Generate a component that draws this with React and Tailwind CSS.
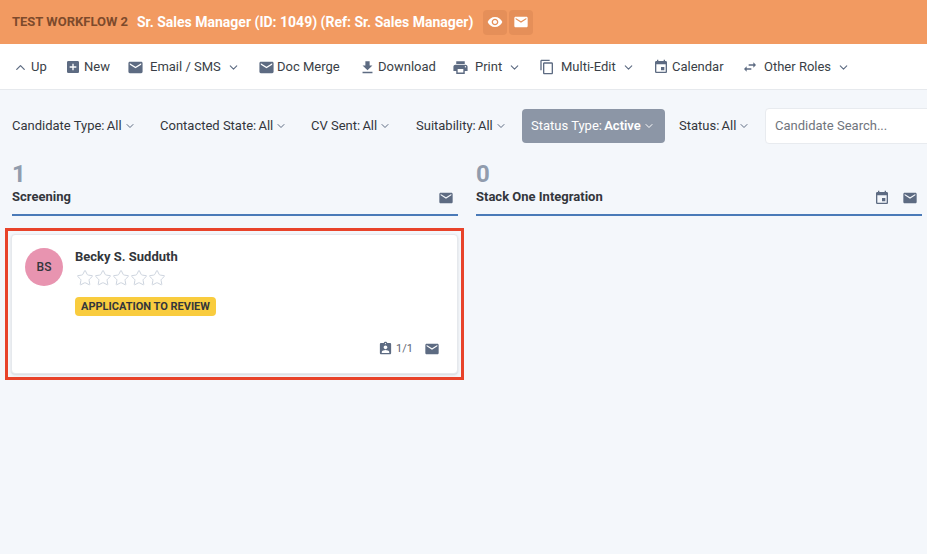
import React from 'react';
import { ChevronDown, ChevronUp, Star } from 'lucide-react';
import {
  MdAddBox,
  MdAssignmentInd,
  MdContentCopy,
  MdEmail,
  MdEvent,
  MdFileDownload,
  MdPrint,
  MdRemoveRedEye,
  MdSwapHoriz,
} from 'react-icons/md';

const toolbar = [
  { label: 'Up', icon: ChevronUp, size: 15, width: 'w-[52px]', gap: 'gap-[3px]' },
  { label: 'New', icon: MdAddBox, size: 16, width: 'w-[62px]', gap: 'gap-[3px]' },
  { label: 'Email / SMS', icon: MdEmail, size: 17, menu: true, width: 'w-[131px]', gap: 'gap-[6px]' },
  { label: 'Doc Merge', icon: MdEmail, size: 17, width: 'w-[101px]', gap: 'gap-[2px]' },
  { label: 'Download', icon: MdFileDownload, size: 17, width: 'w-[93px]', gap: 'gap-[2px]' },
  { label: 'Print', icon: MdPrint, size: 17, menu: true, width: 'w-[87px]', gap: 'gap-[6px]' },
  { label: 'Multi-Edit', icon: MdContentCopy, size: 16, menu: true, width: 'w-[114px]', gap: 'gap-[6px]' },
  { label: 'Calendar', icon: MdEvent, size: 16, width: 'w-[89px]', gap: 'gap-[3px]' },
  { label: 'Other Roles', icon: MdSwapHoriz, size: 16, menu: true, width: 'w-[120px]', gap: 'gap-[6px]' },
];

const filters = [
  { label: 'Candidate Type:', value: 'All', width: 'w-[148px]' },
  { label: 'Contacted State:', value: 'All', width: 'w-[151px]' },
  { label: 'CV Sent:', value: 'All', width: 'w-[105px]' },
  { label: 'Suitability:', value: 'All', width: 'w-[106px]' },
];

const App = () => {
  return (
    <div className="h-[554px] w-[927px] overflow-hidden bg-[#f4f7fb] text-[13px] text-[#33363b] font-['Roboto',sans-serif]">
      <header className="flex h-[44px] items-center bg-[#f29a61] pl-3">
        <span className="w-[125px] text-[13px] font-bold leading-[40px] text-[#7d4a2c]">TEST WORKFLOW 2</span>
        <span className="w-[346px] text-[14px] font-bold text-white">Sr. Sales Manager (ID: 1049) (Ref: Sr. Sales Manager)</span>
        <button className="flex h-[25px] w-[24px] items-center justify-center rounded bg-[#e58f59] text-white">
          <MdRemoveRedEye size={16} />
        </button>
        <button className="ml-[2px] flex h-[25px] w-[24px] items-center justify-center rounded bg-[#e58f59] text-white">
          <MdEmail size={16} />
        </button>
      </header>

      <nav className="flex h-[46px] items-center border-b border-[#e6e9ed] bg-white pl-[13px] pt-[1px]">
        {toolbar.map((item) => (
          <div key={item.label} className={`flex shrink-0 items-center text-[#3a3f47] ${item.width} ${item.gap}`}>
            <item.icon size={item.size} className="shrink-0 text-[#5d6b82]" />
            <span>{item.label}</span>
            {item.menu && <ChevronDown size={13} className="text-[#5d6b82]" />}
          </div>
        ))}
      </nav>

      <div className="mt-[18px] flex h-[35px] items-center pl-3">
        {filters.map((f) => (
          <div key={f.label} className={`flex shrink-0 items-center gap-[2px] ${f.width}`}>
            <span>{f.label} <span className="ml-[-1px]">{f.value}</span></span>
            <ChevronDown size={12} className="text-[#5d6b82]" />
          </div>
        ))}
        <div className="flex h-[34px] w-[143px] shrink-0 items-center gap-[2px] rounded bg-[#8c96a6] pl-[9px] text-white">
          <span>Status Type: <span className="ml-[-1px] font-semibold">Active</span></span>
          <ChevronDown size={12} />
        </div>
        <div className="ml-[14px] flex w-[86px] shrink-0 items-center gap-[2px]">
          <span>Status: <span className="ml-[-1px]">All</span></span>
          <ChevronDown size={12} className="text-[#5d6b82]" />
        </div>
        <div className="flex h-[36px] w-[200px] shrink-0 items-center rounded border border-[#e8ebef] bg-white pl-[9px] text-[#70757d]">
          Candidate Search...
        </div>
      </div>

      <div className="mt-[19px] grid grid-cols-[446px_446px] gap-[18px] pl-3">
        <section className="flex h-[54px] flex-col border-b-2 border-[#4a7ab8]">
          <div className="h-[24px] text-[24px] font-bold leading-[24px] text-[#919cad]">1</div>
          <div className="mt-[1px] flex items-center justify-between pr-[4px]">
            <span className="font-bold">Screening</span>
            <MdEmail size={16} className="mt-[3px] text-[#5d6b82]" />
          </div>
        </section>
        <section className="flex h-[54px] flex-col border-b-2 border-[#4a7ab8]">
          <div className="h-[24px] text-[24px] font-bold leading-[24px] text-[#919cad]">0</div>
          <div className="mt-[1px] flex items-center justify-between pr-[4px]">
            <span className="font-bold">Stack One Integration</span>
            <div className="mt-[3px] flex gap-[12px] text-[#5d6b82]">
              <MdEvent size={16} />
              <MdEmail size={16} />
            </div>
          </div>
        </section>
      </div>

      <div className="ml-[5px] mt-[12px] h-[152px] w-[459px] border-[3px] border-[#e8432a] p-[3px]">
        <article className="flex h-[140px] flex-col rounded-sm border border-[#e6e9ed] bg-white pl-[13px] pr-[17px] pt-[13px] shadow-sm">
          <div className="flex gap-[12px]">
            <div className="flex h-[38px] w-[38px] shrink-0 items-center justify-center rounded-full bg-[#e894b0] text-[12px] font-medium">BS</div>
            <div>
              <div className="h-[18px] text-[13px] font-bold leading-[18px]">Becky S. Sudduth</div>
              <div className="mt-[3px] flex pl-[1px]">
                {[1, 2, 3, 4, 5].map((n) => (
                  <Star key={n} size={18} strokeWidth={1.3} className="text-[#ccd3dd]" />
                ))}
              </div>
              <div className="mt-[10px] inline-block h-[19px] rounded-sm bg-[#f9cc3e] px-[6px] text-[11px] font-bold leading-[19px]">APPLICATION TO REVIEW</div>
            </div>
          </div>
          <div className="mt-auto mb-[16px] flex items-center justify-end text-[11px] text-[#5d6570]">
            <MdAssignmentInd size={15} className="text-[#5d6b82]" />
            <span className="ml-[3px]">1/1</span>
            <MdEmail size={16} className="ml-[11px] text-[#5d6b82]" />
          </div>
        </article>
      </div>
    </div>
  );
};

export default App;
